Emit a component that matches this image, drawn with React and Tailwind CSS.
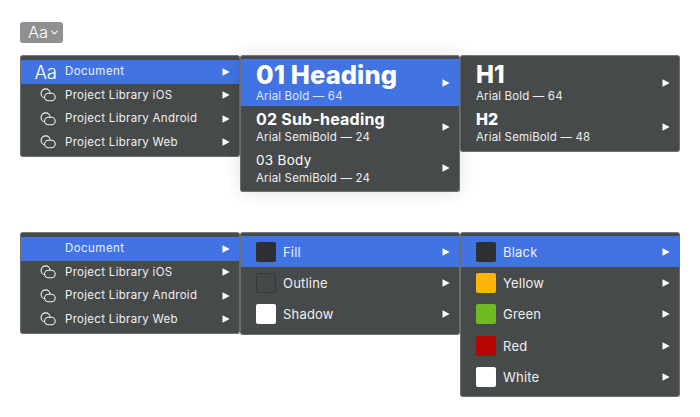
import { ChevronDown } from "lucide-react";

const libraries = ["Project Library iOS", "Project Library Android", "Project Library Web"];

function Arrow() {
  return (
    <svg width="8" height="8" viewBox="0 0 8 8" className="shrink-0 ml-auto mr-[9px]">
      <path d="M0.5 0.3L7.7 4L0.5 7.7Z" fill="#fff" />
    </svg>
  );
}

function LibIcon() {
  return (
    <svg width="16" height="14" viewBox="0 0 16 14" fill="none" stroke="#f2f2f2" strokeWidth="1.1" className="shrink-0">
      <circle cx="5.6" cy="5.4" r="4.5" />
      <rect x="4.6" y="5.2" width="10.6" height="7.6" rx="3.8" fill="#474a4b" />
    </svg>
  );
}

function Menu({ className = "", children }) {
  return (
    <div className={`w-[220px] shrink-0 rounded-[3px] bg-[#474a4b] border border-[#6b6e6f] border-t-[#77797a] text-white overflow-hidden ${className}`}>
      {children}
    </div>
  );
}

function LibraryMenu({ icon }) {
  return (
    <Menu className="h-[102px] pt-1">
      <div className="flex items-center h-[23.5px] bg-[#4273e3]">
        <span className="w-[44px] flex justify-end pr-[8px] text-[18.5px] leading-none font-light text-white">{icon}</span>
        <span className="text-[11.5px] tracking-[0.45px] text-[#eaf0ff]">Document</span>
        <Arrow />
      </div>
      {libraries.map((name) => (
        <div key={name} className="flex items-center h-[23.5px]">
          <span className="w-[44px] flex justify-end pr-[9px]">
            <LibIcon />
          </span>
          <span className="text-[11.5px] tracking-[0.3px] text-[#f0f0f0]">{name}</span>
          <Arrow />
        </div>
      ))}
    </Menu>
  );
}

function StyleRow({ title, titleClass, sub, active, h, gap }) {
  return (
    <div className={`flex items-center pl-[15px] ${h} ${active ? "bg-[#4273e3]" : ""}`}>
      <div className={`flex flex-col ${gap}`}>
        <span className={`whitespace-nowrap text-white ${titleClass}`}>{title}</span>
        <span className={`whitespace-nowrap text-[11.5px] leading-[14px] tracking-[0.15px] ${active ? "text-[#dfe8ff]" : "text-[#eeeeee]"}`}>{sub}</span>
      </div>
      <Arrow />
    </div>
  );
}

function SwatchRow({ label, color, active }) {
  return (
    <div className={`flex items-center pl-[15px] h-[31.3px] ${active ? "bg-[#4273e3]" : ""}`}>
      <span className={`w-5 h-5 shrink-0 rounded-[2px] ${color}`} />
      <span className={`ml-[7px] pt-[2px] text-[13px] tracking-[0.2px] ${active ? "text-[#eaf0ff]" : "text-[#efefef]"}`}>{label}</span>
      <Arrow />
    </div>
  );
}

export default function App() {
  return (
    <div className="w-[700px] h-[417px] bg-white overflow-hidden pl-5 pt-[22px] font-['Inter','Liberation_Sans',sans-serif]">
      <div className="flex items-center w-[43px] h-[21px] rounded-[3px] bg-[#8e9092] pl-[8px] text-white">
        <span className="text-[16.5px] font-light leading-none">Aa</span>
        <ChevronDown size={11} strokeWidth={2.2} className="ml-[1px]" />
      </div>

      <div className="flex items-start mt-3">
        <LibraryMenu icon="Aa" />
        <Menu className="h-[137px] pt-[3px] shadow-[0_0_18px_rgba(0,0,0,0.12)] relative">
          <StyleRow
            active
            h="h-[47px]"
            gap="gap-[2px]"
            title="01 Heading"
            titleClass="text-[25.5px] leading-[25px] font-extrabold tracking-[0.1px]"
            sub="Arial Bold — 64"
          />
          <StyleRow
            h="h-[41px]"
            gap="gap-px"
            title="02 Sub-heading"
            titleClass="text-[16px] leading-[20px] font-bold tracking-[0.2px]"
            sub="Arial SemiBold — 24"
          />
          <StyleRow
            h="h-[41px]"
            gap="gap-px"
            title="03 Body"
            titleClass="text-[13.5px] leading-[20px] tracking-[0.3px]"
            sub="Arial SemiBold — 24"
          />
        </Menu>
        <Menu className="h-[97px] pt-[3px]">
          <StyleRow
            h="h-[47px]"
            gap="gap-[2px]"
            title="H1"
            titleClass="text-[24px] leading-[25px] font-extrabold"
            sub="Arial Bold — 64"
          />
          <StyleRow
            h="h-[41px]"
            gap="gap-px"
            title="H2"
            titleClass="text-[16px] leading-[20px] font-extrabold"
            sub="Arial SemiBold — 48"
          />
        </Menu>
      </div>

      <div className="flex items-start mt-10">
        <LibraryMenu icon="" />
        <Menu className="h-[103px] pt-[3px]">
          <SwatchRow active label="Fill" color="bg-[#2e2f32]" />
          <SwatchRow label="Outline" color="bg-[#46494a] border border-[#37393a]" />
          <SwatchRow label="Shadow" color="bg-white" />
        </Menu>
        <Menu className="h-[165px] pt-[3px]">
          <SwatchRow active label="Black" color="bg-[#2e2f32]" />
          <SwatchRow label="Yellow" color="bg-[#fdb408]" />
          <SwatchRow label="Green" color="bg-[#6ebc1f]" />
          <SwatchRow label="Red" color="bg-[#b70404]" />
          <SwatchRow label="White" color="bg-white" />
        </Menu>
      </div>
    </div>
  );
}
